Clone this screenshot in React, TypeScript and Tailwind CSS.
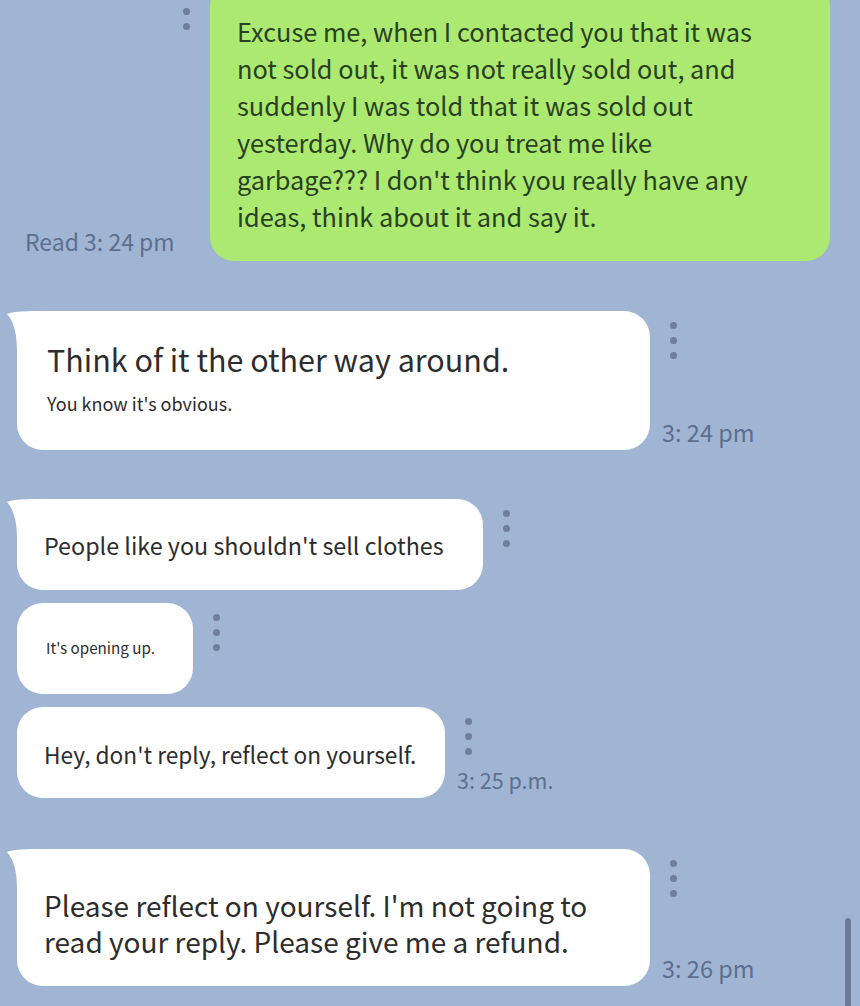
import React from 'react';

const font = { fontFamily: '"Noto Sans CJK JP", "Noto Sans", sans-serif' };

const Dots = ({ className = '' }: { className?: string }) => (
  <div className={`flex flex-col gap-[8px] ${className}`}>
    <span className="block h-[7px] w-[7px] rounded-full bg-[#6f7f9b]" />
    <span className="block h-[7px] w-[7px] rounded-full bg-[#6f7f9b]" />
    <span className="block h-[7px] w-[7px] rounded-full bg-[#6f7f9b]" />
  </div>
);

const Tail = () => (
  <svg className="absolute left-[-10px] top-0" width="40" height="40" viewBox="0 0 40 40">
    <path d="M0 3 C 8 0, 20 0, 34 0 L 34 40 L 10 40 C 10 26, 8 12, 0 3 Z" fill="#ffffff" />
  </svg>
);

type IncomingProps = {
  width: string;
  pad: string;
  tail?: boolean;
  time?: string;
  timeSize?: string;
  children: React.ReactNode;
};

const Incoming = ({ width, pad, tail, time, timeSize = 'text-[23.5px]', children }: IncomingProps) => (
  <div className="flex items-stretch pl-[17px]">
    <div className={`relative rounded-[26px] bg-white text-[#2d2d2d] ${width} ${pad}`}>
      {tail && <Tail />}
      <div className="relative">{children}</div>
    </div>
    <div className="flex flex-col justify-between pl-[12px] pt-[11px] pb-[5px]">
      <Dots className="ml-[8px]" />
      {time && <span className={`${timeSize} leading-[26px] text-[#5c6f8e]`}>{time}</span>}
    </div>
  </div>
);

export default function App() {
  return (
    <div className="relative h-[1006px] w-[860px] overflow-hidden bg-[#a0b5d4]" style={font}>
      {/* sent message */}
      <div className="flex -mt-[18px]">
        <div className="flex w-[210px] flex-col justify-between pb-[7px]">
          <Dots className="ml-[183px] mt-[11px]" />
          <span className="pl-[25px] text-[23px] leading-[26px] text-[#5c6f8e]">Read 3: 24 pm</span>
        </div>
        <div className="w-[620px] rounded-[24px] bg-[#abe970] pl-[27px] pr-[20px] pt-[31px] pb-[26px] text-[25.3px] leading-[37px] text-[#2a4020]">
          Excuse me, when I contacted you that it was
          <br />
          not sold out, it was not really sold out, and
          <br />
          suddenly I was told that it was sold out
          <br />
          yesterday. Why do you treat me like
          <br />
          garbage??? I don't think you really have any
          <br />
          ideas, think about it and say it.
        </div>
      </div>

      <div className="mt-[50px] flex flex-col">
        <Incoming width="w-[633px]" pad="pl-[30px] pt-[28px] pb-[35px]" tail time="3: 24 pm">
          <div className="text-[30.5px] leading-[40px]">Think of it the other way around.</div>
          <div className="mt-[12px] text-[18px] leading-[24px]">You know it's obvious.</div>
        </Incoming>

        <div className="mt-[49px]">
          <Incoming width="w-[466px]" pad="pl-[27px] pt-[31px] pb-[30px]" tail>
            <div className="text-[23.3px] leading-[30px]">People like you shouldn't sell clothes</div>
          </Incoming>
        </div>

        <div className="mt-[13px]">
          <Incoming width="w-[176px]" pad="pl-[29px] pt-[33px] pb-[36px]">
            <div className="text-[15.2px] leading-[22px]">It's opening up.</div>
          </Incoming>
        </div>

        <div className="mt-[13px]">
          <Incoming
            width="w-[428px]"
            pad="pl-[27px] pt-[33px] pb-[28px]"
            time="3: 25 p.m."
            timeSize="text-[21.5px]"
          >
            <div className="text-[22.7px] leading-[30px]">Hey, don't reply, reflect on yourself.</div>
          </Incoming>
        </div>

        <div className="mt-[51px]">
          <Incoming width="w-[633px]" pad="pl-[27px] pt-[38px] pb-[27px]" tail time="3: 26 pm">
            <div className="text-[28px] leading-[36px]">
              Please reflect on yourself. I'm not going to
              <br />
              read your reply. Please give me a refund.
            </div>
          </Incoming>
        </div>
      </div>

      {/* scrollbar */}
      <div className="absolute left-[845px] top-[918px] h-[100px] w-[6px] rounded-full bg-[#6b7b96]" />
    </div>
  );
}
